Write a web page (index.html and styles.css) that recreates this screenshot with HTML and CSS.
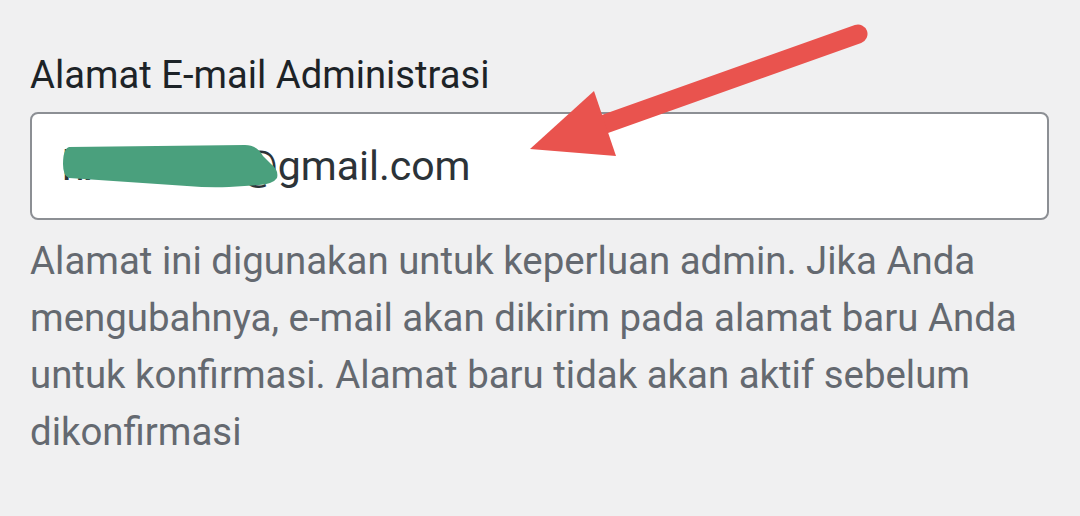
FILE: index.html
```html
<!DOCTYPE html>
<html lang="id"><head>
<meta charset="utf-8">
<title>Pengaturan Umum</title>
<link rel="stylesheet" href="styles.css">
</head>
<body>
<div class="wrap">
  <label for="admin_email" class="lbl">Alamat E-mail Administrasi</label>
  <div class="field">
    <input id="admin_email" type="email" value="hxxxxrxxx@gmail.com">
    <svg class="blur" width="240" height="60" viewBox="0 0 240 60">
      <path d="M10 3 L186 1 Q198 1 204 12 L212 20 Q220 26 218 34 Q214 40 200 41 L170 43 Q150 44 128 42 L10 34 Q4 32 4 20 Q4 5 10 3 Z" fill="#4aa07d"/>
    </svg>
  </div>
  <p class="desc">Alamat ini digunakan untuk keperluan admin. Jika Anda mengubahnya, e-mail akan dikirim pada alamat baru Anda untuk konfirmasi. Alamat baru tidak akan aktif sebelum dikonfirmasi</p>
</div>
<svg class="arrow" width="1080" height="516" viewBox="0 0 1080 516">
  <line x1="858" y1="34" x2="588" y2="130" stroke="#e9534e" stroke-width="19" stroke-linecap="round"/>
  <polygon points="530,149 594,91 616,156" fill="#e9534e"/>
</svg>
</body>
</html>
```

FILE: styles.css
```css
*,*::before,*::after {box-sizing: border-box;}
body {
  margin: 0;
  background: #f0f0f1;
  font-family: Roboto, "Liberation Sans", sans-serif;
  color: #1d2327;
}
.wrap {
  padding: 51px 0 0 30px;
  width: 1050px;
}
.lbl {
  display: block;
  font-size: 38.2px;
  line-height: 48px;
  margin-bottom: 13px;
}
.field {
  position: relative;
  width: 1019px;
}
.field input {
  display: block;
  width: 100%;
  height: 108px;
  padding: 0 30px;
  border: 2px solid #8c8f94;
  border-radius: 8px;
  background: #fff;
  font-family: Roboto, "Liberation Sans", sans-serif;
  font-size: 41px;
  color: #2c3338;
  outline: none;
}
.blur {
  position: absolute;
  left: 29px;
  top: 32px;
}
.desc {
  margin: 12px 0 0;
  font-size: 38.4px;
  line-height: 57px;
  color: #646970;
  width: 1020px;
}
.arrow {
  position: absolute;
  left: 0;
  top: 0;
  pointer-events: none;
}
```
